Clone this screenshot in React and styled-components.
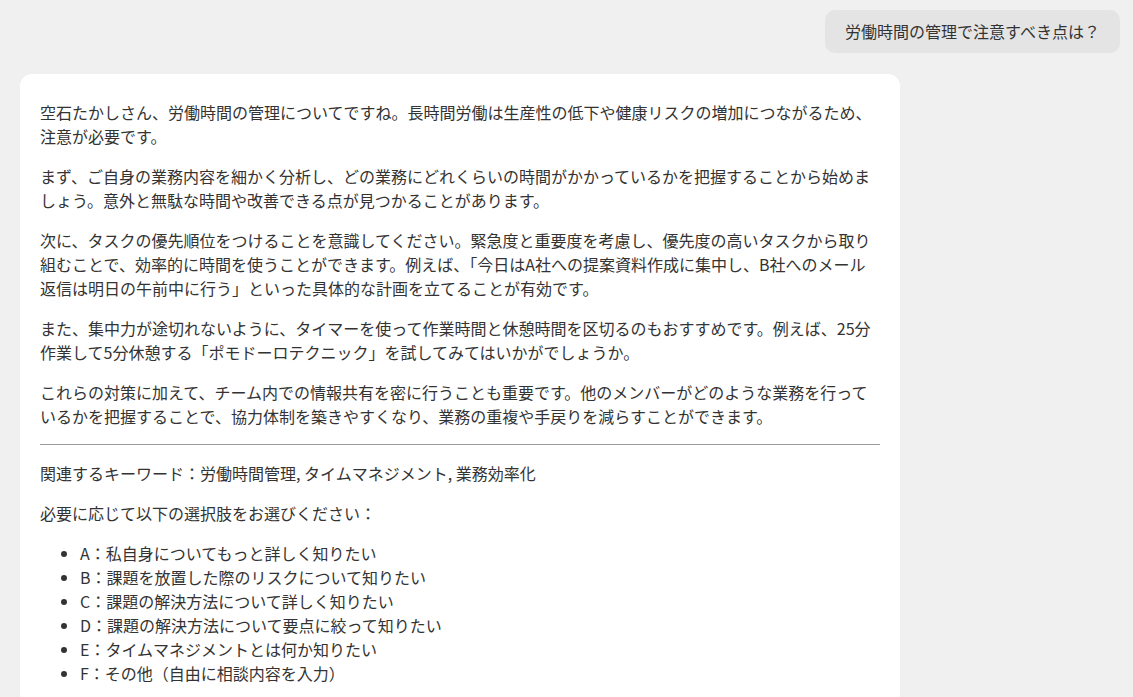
import styled, { createGlobalStyle } from "styled-components";

const GlobalStyle = createGlobalStyle`
  body {
    margin: 0;
    background: #f0f0f0;
    font-family: "Noto Sans CJK JP", "Noto Sans", sans-serif;
    color: #333;
  }
`;

const ChatArea = styled.div`
  display: flex;
  flex-direction: column;
  gap: 21px;
  padding: 10px 13px 0 20px;
  min-height: 697px;
  box-sizing: border-box;
`;

const UserBubble = styled.div`
  align-self: flex-end;
  background: #e4e4e4;
  border-radius: 10px;
  padding: 10px 20px;
  font-size: 16px;
  line-height: 23px;
`;

const AssistantCard = styled.div`
  width: 880px;
  box-sizing: border-box;
  background: #fff;
  border-radius: 12px;
  padding: 10px 20px;
  font-size: 16px;
  line-height: 24px;
`;

const Paragraph = styled.p`
  margin: 16px 0;
`;

const Divider = styled.hr`
  border: none;
  border-top: 1px solid #9a9a9a;
  margin: 16px 0;
`;

const OptionList = styled.ul`
  margin: 16px 0;
  padding-left: 40px;
`;

const paragraphs = [
  "空石たかしさん、労働時間の管理についてですね。長時間労働は生産性の低下や健康リスクの増加につながるため、注意が必要です。",
  "まず、ご自身の業務内容を細かく分析し、どの業務にどれくらいの時間がかかっているかを把握することから始めましょう。意外と無駄な時間や改善できる点が見つかることがあります。",
  "次に、タスクの優先順位をつけることを意識してください。緊急度と重要度を考慮し、優先度の高いタスクから取り組むことで、効率的に時間を使うことができます。例えば、「今日はA社への提案資料作成に集中し、B社へのメール返信は明日の午前中に行う」といった具体的な計画を立てることが有効です。",
  "また、集中力が途切れないように、タイマーを使って作業時間と休憩時間を区切るのもおすすめです。例えば、25分作業して5分休憩する「ポモドーロテクニック」を試してみてはいかがでしょうか。",
  "これらの対策に加えて、チーム内での情報共有を密に行うことも重要です。他のメンバーがどのような業務を行っているかを把握することで、協力体制を築きやすくなり、業務の重複や手戻りを減らすことができます。",
];

const options = [
  "A：私自身についてもっと詳しく知りたい",
  "B：課題を放置した際のリスクについて知りたい",
  "C：課題の解決方法について詳しく知りたい",
  "D：課題の解決方法について要点に絞って知りたい",
  "E：タイムマネジメントとは何か知りたい",
  "F：その他（自由に相談内容を入力）",
];

const App = () => {
  return (
    <>
      <GlobalStyle />
      <ChatArea>
        <UserBubble>労働時間の管理で注意すべき点は？</UserBubble>
        <AssistantCard>
          {paragraphs.map((text) => (
            <Paragraph key={text}>{text}</Paragraph>
          ))}
          <Divider />
          <Paragraph>関連するキーワード：労働時間管理, タイムマネジメント, 業務効率化</Paragraph>
          <Paragraph>必要に応じて以下の選択肢をお選びください：</Paragraph>
          <OptionList>
            {options.map((item) => (
              <li key={item}>{item}</li>
            ))}
          </OptionList>
        </AssistantCard>
      </ChatArea>
    </>
  );
};

export default App;
